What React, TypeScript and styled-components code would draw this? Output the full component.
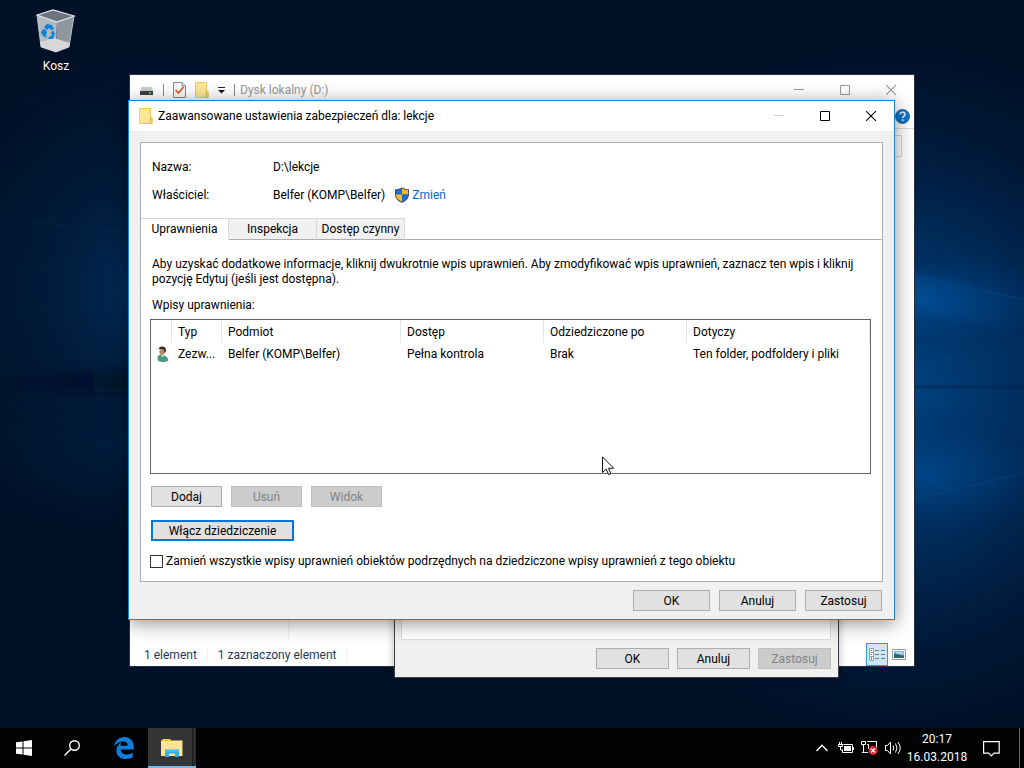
import React from 'react';
import styled, { createGlobalStyle, css } from 'styled-components';

const font = 'Roboto, "Open Sans", sans-serif';

const GlobalStyle = createGlobalStyle`
  *, *::before, *::after { box-sizing: border-box; }
  body { margin: 0; background: #00122b; font: 12px/15px ${font}; color: #000; }
  button, input, table { font: inherit; color: inherit; }
`;

/* ---------- desktop ---------- */

const Desktop = styled.div`
  position: relative;
  display: flex;
  flex-direction: column;
  min-height: 100vh;
  overflow: hidden;
`;

const WallpaperSvg = styled.svg`
  position: absolute;
  inset: 0;
  width: 100%;
  height: 100%;
`;

const Workspace = styled.main`
  position: relative;
  flex: 1;
  min-height: 680px;
`;

const DesktopIcon = styled.a`
  display: flex;
  flex-direction: column;
  align-items: center;
  gap: 4px;
  width: 76px;
  margin-left: 18px;
  padding-top: 7px;
  color: #fff;
  text-decoration: none;
  text-shadow: 0 1px 2px #000;
`;

/* ---------- windows ---------- */

const Window = styled.section`
  position: absolute;
  display: flex;
  flex-direction: column;
`;

const ExplorerWindow = styled(Window)`
  left: 129px;
  top: 74px;
  width: 786px;
  height: 593px;
  border: 1px solid #26323f;
  background: #fff;
`;

const PropertiesWindow = styled(Window)`
  left: 394px;
  top: 200px;
  width: 445px;
  height: 478px;
  padding: 7px 7px 8px 6px;
  gap: 8px;
  border: 1px solid #3c4046;
  background: #f0f0f0;
  box-shadow: 0 2px 8px rgba(0, 0, 0, 0.3);
`;

const SecurityWindow = styled(Window)`
  left: 128px;
  top: 100px;
  width: 767px;
  height: 520px;
  border: 1px solid #1883d7;
  background: #f0f0f0;
  box-shadow: 0 3px 18px rgba(0, 0, 0, 0.45);
`;

const TitleBar = styled.header<{ $inactive?: boolean }>`
  display: flex;
  align-items: center;
  height: 30px;
  padding-left: ${p => (p.$inactive ? 9 : 10)}px;
  background: #fff;
  color: ${p => (p.$inactive ? '#999' : '#000')};
`;

const QuickAccess = styled.div`
  display: flex;
  align-items: center;
  gap: 9px;
`;

const Separator = styled.span<{ $light?: boolean }>`
  width: 1px;
  height: 12px;
  background: ${p => (p.$light ? '#eee' : '#8a8a8a')};
`;

const Title = styled.h1`
  flex: 1;
  margin: 0 0 0 5px;
  font-size: 12px;
  font-weight: 400;
  white-space: nowrap;
`;

const CaptionButton = styled.button`
  display: grid;
  place-items: center;
  width: 46px;
  height: 30px;
  padding: 0;
  border: 0;
  background: none;
`;

const RibbonRow = styled.div`
  display: flex;
  justify-content: flex-end;
  align-items: center;
  height: 24px;
  padding-right: 4px;
  border-bottom: 1px solid #dadbdc;
`;

const HelpButton = styled.button`
  display: grid;
  place-items: center;
  padding: 0;
  border: 0;
  background: none;
`;

const SearchRow = styled.div`
  padding: 6px 12px;
`;

const SearchBox = styled.input`
  display: block;
  width: 100%;
  height: 22px;
  border: 1px solid #d9d9d9;
  background: #fff;
`;

const FolderArea = styled.div`
  flex: 1;
  margin-bottom: 2px;
  display: flex;
`;

const NavPane = styled.nav`
  width: 159px;
  border-right: 1px solid #f0f0f0;
`;

const StatusBar = styled.footer`
  display: flex;
  align-items: center;
  height: 23px;
  padding-left: 14px;
  gap: 10px;
  color: #1e395b;
`;

const StatusText = styled.span`
  padding-top: 2px;
`;

const ViewModes = styled.div`
  display: flex;
  margin-left: auto;
  padding-right: 4px;
`;

const ViewButton = styled.button<{ $active?: boolean }>`
  display: grid;
  place-items: center;
  width: 22px;
  height: 23px;
  padding: 0;
  border: 1px solid ${p => (p.$active ? '#26a0da' : 'transparent')};
  background: ${p => (p.$active ? '#cbe8f6' : 'none')};
`;

/* ---------- dialog parts ---------- */

const PushButton = styled.button<{ $size: 'small' | 'sheet' | 'dialog' | 'wide'; $focused?: boolean }>`
  width: ${p => ({ small: 71, sheet: 73, dialog: 77, wide: 143 })[p.$size]}px;
  height: 21px;
  padding: 1px 0 0;
  border: 1px solid #adadad;
  background: #e1e1e1;
  line-height: 15px;
  white-space: nowrap;
  ${p => p.$focused && css`border: 2px solid #0078d7;`}
  &:disabled {
    border-color: #bfbfbf;
    background: #ccc;
    color: #838383;
  }
`;

const ButtonRow = styled.div<{ $align?: 'end'; $gap: number }>`
  display: flex;
  gap: ${p => p.$gap}px;
  justify-content: ${p => (p.$align === 'end' ? 'flex-end' : 'flex-start')};
`;

const DialogButtons = styled(ButtonRow)`
  padding-right: 1px;
`;

const PropertiesPage = styled.div`
  flex: 1;
  border: 1px solid #dcdcdc;
  background: #fff;
`;

const DialogBody = styled.div`
  flex: 1;
  display: flex;
  flex-direction: column;
  gap: 8px;
  padding: 11px 11px 8px;
`;

const Panel = styled.div`
  flex: 1;
  display: flex;
  flex-direction: column;
  border: 1px solid #adadad;
  background: #fff;
`;

const Details = styled.dl`
  display: grid;
  grid-template-columns: 121px 1fr;
  grid-auto-rows: 20px;
  row-gap: 8px;
  align-items: center;
  margin: 0;
  padding: 14px 11px 13px;
`;

const Term = styled.dt``;

const Detail = styled.dd`
  display: flex;
  align-items: center;
  gap: 9px;
  margin: 0;
`;

const ChangeLink = styled.a`
  display: flex;
  align-items: center;
  gap: 2px;
  color: #0066cc;
  text-decoration: none;
`;

const TabList = styled.div`
  display: flex;
  height: 22px;
  &::after {
    content: '';
    flex: 1;
    border-bottom: 1px solid #adadad;
  }
`;

const Tab = styled.button<{ $selected?: boolean }>`
  width: 88px;
  padding: 0;
  border: 1px solid #d9d9d9;
  border-left-width: 0;
  border-bottom-color: ${p => (p.$selected ? '#fff' : '#adadad')};
  background: ${p => (p.$selected ? '#fff' : '#f0f0f0')};
  white-space: nowrap;
`;

const TabPanel = styled.div`
  flex: 1;
  display: flex;
  flex-direction: column;
  padding: 17px 11px 12px 9px;
`;

const Description = styled.p`
  margin: 0 0 11px;
  padding: 0 2px;
`;

const ListLabel = styled.h2`
  margin: 0 0 6px;
  padding: 0 2px;
  font-size: 12px;
  font-weight: 400;
`;

const ListBox = styled.div`
  flex: 1;
  margin-bottom: 12px;
  border: 1px solid #646464;
`;

const Entries = styled.table`
  width: 100%;
  table-layout: fixed;
  border-collapse: separate;
  border-spacing: 0;
`;

const HeaderCell = styled.th<{ $width?: number }>`
  width: ${p => (p.$width ? `${p.$width}px` : 'auto')};
  height: 23px;
  padding: 1px 6px 0;
  border-right: 1px solid #e5e5e5;
  font-weight: 400;
  text-align: left;
`;

const Cell = styled.td`
  height: 22px;
  padding: 0 6px;
  overflow: hidden;
  text-overflow: ellipsis;
  white-space: nowrap;
`;

const IconCell = styled(Cell)`
  padding: 0 4px;
  text-overflow: clip;
  & > svg { display: block; }
`;

const Actions = styled.div`
  display: flex;
  flex-direction: column;
  gap: 13px;
  padding-left: 1px;
`;

const CheckLabel = styled.label`
  display: flex;
  align-items: center;
  gap: 3px;
  margin-top: 13px;
`;

const CheckBox = styled.input`
  appearance: none;
  width: 13px;
  height: 13px;
  margin: 0;
  border: 1px solid #333;
  background: #fff;
`;

const Pointer = styled.svg`
  position: absolute;
  left: 602px;
  top: 456px;
`;

/* ---------- taskbar ---------- */

const Taskbar = styled.footer`
  position: relative;
  display: flex;
  align-items: stretch;
  height: 40px;
  background: #010204;
  color: #fff;
`;

const TaskButton = styled.button<{ $active?: boolean }>`
  display: grid;
  place-items: center;
  width: 48px;
  padding: 0;
  border: 0;
  background: none;
  ${p => p.$active && css`
    background: linear-gradient(90deg, #343537 44px, #1c1d1f 44px, #1c1d1f 45px, #2c2d2f 45px);
    border-bottom: 2px solid #76b9ed;
    padding-top: 2px;
  `}
`;

const AppButtons = styled.div`
  display: flex;
  margin-left: 4px;
`;

const Tray = styled.div`
  display: flex;
  align-items: stretch;
  margin-left: auto;
`;

const TrayButton = styled.button<{ $wide?: boolean }>`
  display: grid;
  place-items: center;
  width: ${p => (p.$wide ? 46 : 24)}px;
  padding: 0;
  border: 0;
  background: none;
`;

const Clock = styled.time`
  display: flex;
  flex-direction: column;
  gap: 3px;
  width: 62px;
  padding-top: 4px;
  text-align: center;
`;

const ShowDesktop = styled.button`
  width: 5px;
  margin-left: 5px;
  padding: 0;
  border: 0;
  border-left: 1px solid #6a6b6d;
  background: none;
`;

/* ---------- drawings ---------- */

const Wallpaper = () => (
  <WallpaperSvg viewBox="0 0 1024 768" preserveAspectRatio="none" aria-hidden="true">
    <defs>
      <radialGradient id="glowRight">
        <stop offset="0" stopColor="#0058a8" />
        <stop offset="0.45" stopColor="#004080" stopOpacity="0.75" />
        <stop offset="1" stopColor="#00204a" stopOpacity="0" />
      </radialGradient>
      <radialGradient id="glowLeft">
        <stop offset="0" stopColor="#003566" stopOpacity="0.9" />
        <stop offset="1" stopColor="#001a3a" stopOpacity="0" />
      </radialGradient>
      <linearGradient id="ray" x1="0" x2="1">
        <stop offset="0" stopColor="#0a62b4" stopOpacity="0.6" />
        <stop offset="1" stopColor="#00509a" stopOpacity="0.1" />
      </linearGradient>
      <linearGradient id="band" x1="0" x2="1">
        <stop offset="0" stopColor="#000d20" stopOpacity="0" />
        <stop offset="1" stopColor="#000d20" stopOpacity="0.8" />
      </linearGradient>
      <filter id="soft" x="-20%" y="-50%" width="140%" height="200%">
        <feGaussianBlur stdDeviation="4" />
      </filter>
    </defs>
    <rect width="1024" height="768" fill="#001128" />
    <ellipse cx="890" cy="390" rx="330" ry="350" fill="url(#glowRight)" opacity="0.75" />
    <ellipse cx="925" cy="300" rx="170" ry="60" fill="url(#glowRight)" opacity="0.45" />
    <ellipse cx="925" cy="475" rx="150" ry="70" fill="url(#glowRight)" opacity="0.45" />
    <ellipse cx="140" cy="290" rx="220" ry="240" fill="url(#glowLeft)" opacity="0.85" />
    <ellipse cx="130" cy="450" rx="200" ry="90" fill="url(#glowLeft)" opacity="0.3" />
    <path d="M905 272 1024 300V330L905 310z" fill="url(#ray)" opacity="0.5" filter="url(#soft)" />
    <path d="M915 276 1024 299.500" stroke="#0b62ae" strokeOpacity="0.3" />
    <path d="M915 499 1024 473" stroke="#0b62ae" strokeOpacity="0.3" />
    <path d="M915 387H1024" stroke="#002448" strokeWidth="4" strokeOpacity="0.4" />
    <path d="M0 372H150V392H0z" fill="url(#band)" filter="url(#soft)" />
    <path d="M0 218 130 233" stroke="#0a4070" strokeOpacity="0.25" />
    <path d="M30 98 66 122" stroke="#0a4070" strokeOpacity="0.2" />
  </WallpaperSvg>
);

const RecycleBinIcon = () => (
  <svg width="40" height="48" viewBox="0 0 40 48" aria-hidden="true">
    <path d="M1 8 21 15 20 45 5 40z" fill="#b4bac1" />
    <path d="M21 15 38 9 33 40 20 45z" fill="#8d979f" />
    <path d="M1 8 17 3 38 9 21 15z" fill="#6c7480" />
    <path d="M4 35 18 31 34 36 33 40 20 45 5 40z" fill="#d5d7d9" />
    <path d="M1 8 17 3 38 9 21 15z" fill="none" stroke="#e4e7ea" strokeWidth="1.200" />
    <path d="M1 8 5 40 20 45 33 40 38 9" fill="none" stroke="#d3d8dc" strokeWidth="0.800" />
    <g fill="#0a84d8">
      <path d="M8 20l3-3 5 1 2 4-3 1-2-2-2 2z" />
      <path d="M6 23l3-1 2 3-1 3 1 3-4-2-2-3z" />
      <path d="M17 23l2 4-2 5h-5l2-3h2l-1-3z" />
    </g>
  </svg>
);

const FolderIcon = () => (
  <svg width="14" height="16" viewBox="0 0 14 16" aria-hidden="true">
    <path d="M.5.500h11v9h1.500v6H.500z" fill="#ffe594" stroke="#f0cb5e" />
    <path d="M11 15.500v-5.500l2-.5v6z" fill="#fbd768" stroke="#e6bd45" strokeWidth="0.800" />
  </svg>
);

const DriveIcon = () => (
  <svg width="15" height="16" viewBox="0 0 15 16" aria-hidden="true">
    <path d="M2.500 5h10L14 9H1z" fill="#c9ccce" />
    <path d="M1 9h13v4H1z" fill="#3b3f42" />
    <path d="M10 11h2" stroke="#5fe06a" strokeWidth="1.500" />
  </svg>
);

const PropertiesIcon = () => (
  <svg width="13" height="16" viewBox="0 0 13 16" aria-hidden="true">
    <path d="M.5.500h8.500l3.500 3.500v11.500H.500z" fill="#fafafa" stroke="#888" />
    <path d="M9 .500V4h3.500" fill="#ddd" stroke="#888" />
    <path d="M2.500 8 5.500 11 10.500 5" fill="none" stroke="#e8561f" strokeWidth="1.700" />
  </svg>
);

const DropIcon = () => (
  <svg width="7" height="8" viewBox="0 0 7 8" aria-hidden="true">
    <path d="M0 1.500h7" stroke="#222" />
    <path d="M0 4h7L3.500 7.500z" fill="#111" />
  </svg>
);

const MinimizeIcon = ({ color }: { color: string }) => (
  <svg width="10" height="10" viewBox="0 0 10 10" aria-hidden="true">
    <path d="M0 4.500h10" stroke={color} />
  </svg>
);

const MaximizeIcon = ({ color }: { color: string }) => (
  <svg width="10" height="10" viewBox="0 0 10 10" aria-hidden="true">
    <path d="M.5.500h9v9h-9z" fill="none" stroke={color} />
  </svg>
);

const CloseIcon = ({ color }: { color: string }) => (
  <svg width="10" height="10" viewBox="0 0 10 10" aria-hidden="true">
    <path d="M0 0 10 10M10 0 0 10" stroke={color} strokeWidth="1.100" />
  </svg>
);

const HelpIcon = () => (
  <svg width="15" height="15" viewBox="0 0 15 15" aria-hidden="true">
    <circle cx="7.500" cy="7.500" r="7" fill="#0a76d0" stroke="#07549b" strokeWidth="0.800" />
    <path d="M5.200 5.500c0-3 4.800-3 4.800-.2 0 1.800-2.300 1.800-2.300 3.700M7.700 10.200v1.800" fill="none" stroke="#d8ecfb" strokeWidth="1.700" />
  </svg>
);

const ShieldIcon = () => (
  <svg width="16" height="16" viewBox="0 0 16 16" aria-hidden="true">
    <path d="M8 .200C6 1.700 3.500 2.200 1 2.200v5.300c0 4 3 6.800 7 8.300 4-1.500 7-4.300 7-8.300V2.200C12.500 2.200 10 1.700 8 .200z" fill="#48525c" />
    <path d="M8 1.500V7.500H2V3.200c2.300 0 4.300-.5 6-1.700z" fill="#1b6fd0" />
    <path d="M8 1.500V7.500h6V3.200c-2.300 0-4.300-.5-6-1.700z" fill="#fdbb2c" />
    <path d="M2 7.500h6v7c-3.500-1.300-6-3.500-6-7z" fill="#fdbb2c" />
    <path d="M14 7.500H8v7c3.500-1.300 6-3.500 6-7z" fill="#1b6fd0" />
  </svg>
);

const PersonIcon = () => (
  <svg width="16" height="16" viewBox="0 0 16 16" aria-hidden="true">
    <path d="M3 14.500c-1-2.500-1-5.500 3-6 3 0 7 2.500 7.500 6-3 2-8 2-10.500 0z" fill="#4a9c7c" />
    <path d="M5.500 8.500 8 11.500l1-2.500z" fill="#e4efe9" />
    <ellipse cx="7" cy="5.500" rx="2.600" ry="3.800" fill="#b98a68" />
    <path d="M3.500 3C4-.5 11.500-.8 11 4.500L9.800 7.500 8.500 3z" fill="#2f2b29" />
  </svg>
);

const DetailsViewIcon = () => (
  <svg width="16" height="14" viewBox="0 0 16 14" aria-hidden="true">
    <path d="M.5.500h4v4h-4zM.5 4.500h4v4h-4zM.5 8.500h4v4h-4z" fill="#fff" stroke="#999" />
    <path d="M2 2.500h1" stroke="#444" />
    <path d="M2 6.500h1" stroke="#2a7ad0" />
    <path d="M2 10.500h1" stroke="#e02020" strokeWidth="2" />
    <path d="M6 2.500h4M12 2.500h4M6 6.500h4M12 6.500h4M6 10.500h4M12 10.500h4" stroke="#777" />
  </svg>
);

const PictureViewIcon = () => (
  <svg width="14" height="11" viewBox="0 0 14 11" aria-hidden="true">
    <path d="M.5.500h13v10H.500z" fill="#fff" stroke="#999" />
    <path d="M2 2h10v7H2z" fill="#7fb5f0" />
    <path d="M2 4.500c4 0 6 2 10 2V9H2z" fill="#2e6a6a" />
    <path d="M4 4h7" stroke="#e8f3fd" />
  </svg>
);

const ArrowCursor = () => (
  <Pointer width="13" height="20" viewBox="0 0 13 20" aria-hidden="true">
    <path d="M.5.800V16.500L4.200 13l2.500 5.700 2.200-1-2.400-5.400h5.200z" fill="#fff" stroke="#111" />
  </Pointer>
);

const StartIcon = () => (
  <svg width="16" height="16" viewBox="0 0 16 16" fill="#fff" aria-hidden="true">
    <path d="M0 2.300 6.500 1.400V7.500H0zM7.500 1.200 16 0v7.500H7.500zM0 8.500h6.500v6.100L0 13.700zM7.500 8.500H16V16l-8.500-1.200z" />
  </svg>
);

const SearchIcon = () => (
  <svg width="16" height="16" viewBox="0 0 16 16" fill="none" stroke="#fff" strokeWidth="1.400" aria-hidden="true">
    <circle cx="10.500" cy="5.500" r="4.800" />
    <path d="M7 9 .500 15.500" />
  </svg>
);

const EdgeIcon = () => (
  <svg width="20" height="22" viewBox="0 0 20 22" aria-hidden="true">
    <path
      d="M0 9.500C1 3.500 5.200 0 10.300 0 16 0 19.800 4.200 19.800 9.800v2.700H6.700c.2 3.300 2.900 5 6 5 2.200 0 4.200-.6 6-1.700v4.500c-2 1.100-4.400 1.700-7 1.700-5.600 0-9.300-3.200-9.300-8.300 0-3.700 2-6.800 5.300-8.200-.8 1-1.200 2.100-1.300 3.200h7.200c0-2.700-1.200-4.300-4-4.300-4 0-7.600 2.300-9.600 5.100z"
      fill="#0f7ddb"
    />
  </svg>
);

const ExplorerIcon = () => (
  <svg width="22" height="18" viewBox="0 0 22 18" aria-hidden="true">
    <path d="M0 1.500h1L2 0h7l1 1.500h11.500V17H0z" fill="#ffe594" />
    <path d="M1 .500h8.500V2H1z" fill="#f2b61e" />
    <path d="M4 18v-7.500h14V18h-4v-3.500H8V18z" fill="#33aee6" />
    <path d="M4 10.500h14v2H4z" fill="#5cc3ee" />
  </svg>
);

const ChevronIcon = () => (
  <svg width="12" height="8" viewBox="0 0 12 8" fill="none" stroke="#fff" strokeWidth="1.300" aria-hidden="true">
    <path d="M.5 7 6 1.200 11.500 7" />
  </svg>
);

const BatteryIcon = () => (
  <svg width="16" height="13" viewBox="0 0 16 13" aria-hidden="true">
    <path d="M5.500 2.500h9v8H4.500V7.500" fill="none" stroke="#fff" />
    <path d="M6 4h7v5H6zM14.500 5H16v3h-1.500z" fill="#fff" />
    <path d="M1.500 0v2M3.500 0v2M0 2.500h5M.5 3v1.500h4V3M2.500 5v3h2" fill="none" stroke="#fff" />
  </svg>
);

const NetworkIcon = () => (
  <svg width="18" height="16" viewBox="0 0 18 16" aria-hidden="true">
    <path d="M.5 1.500h4v3h-4zM2.500 4.500v8M1 12.500h6M6 1.500h9.500v6M7.500 9V4.500H6" fill="none" stroke="#fff" />
    <circle cx="12" cy="10.500" r="4.500" fill="#e0232e" />
    <path d="M10 8.500l4 4M14 8.500l-4 4" stroke="#fff" strokeWidth="1.300" />
  </svg>
);

const SoundIcon = () => (
  <svg width="18" height="14" viewBox="0 0 18 14" fill="none" stroke="#fff" aria-hidden="true">
    <path d="M.5 4.500h2l3-3.500v12l-3-3.500h-2z" />
    <path d="M8 4.500q1.500 2.500 0 5M10.500 2.500q3 4.500 0 9M13 1q4.500 6 0 12" />
  </svg>
);

const ActionCenterIcon = () => (
  <svg width="17" height="17" viewBox="0 0 17 17" fill="none" stroke="#fff" strokeWidth="1.200" aria-hidden="true">
    <path d="M.6 1.600h15.600v11.500h-5.200L8.300 15.800 5.700 13.100H.600z" />
  </svg>
);

/* ---------- composition ---------- */

const CaptionButtons = ({ color, minimizeColor = color }: { color: string; minimizeColor?: string }) => (
  <>
    <CaptionButton aria-label="Minimalizuj"><MinimizeIcon color={minimizeColor} /></CaptionButton>
    <CaptionButton aria-label="Maksymalizuj"><MaximizeIcon color={color} /></CaptionButton>
    <CaptionButton aria-label="Zamknij"><CloseIcon color={color} /></CaptionButton>
  </>
);

const columns = [
  { label: '', width: 21 },
  { label: 'Typ', width: 50 },
  { label: 'Podmiot', width: 179 },
  { label: 'Dostęp', width: 143 },
  { label: 'Odziedziczone po', width: 143 },
  { label: 'Dotyczy' },
];

const entry = ['Zezw...', 'Belfer (KOMP\\Belfer)', 'Pełna kontrola', 'Brak', 'Ten folder, podfoldery i pliki'];

const Explorer = () => (
  <ExplorerWindow aria-label="Dysk lokalny (D:)">
    <TitleBar $inactive>
      <QuickAccess>
        <DriveIcon />
        <Separator />
        <PropertiesIcon />
        <FolderIcon />
        <DropIcon />
        <Separator />
      </QuickAccess>
      <Title>Dysk lokalny (D:)</Title>
      <CaptionButtons color="#999" />
    </TitleBar>
    <RibbonRow>
      <HelpButton aria-label="Pomoc"><HelpIcon /></HelpButton>
    </RibbonRow>
    <SearchRow><SearchBox type="search" aria-label="Przeszukaj" /></SearchRow>
    <FolderArea><NavPane /></FolderArea>
    <StatusBar>
      <StatusText>1 element</StatusText>
      <Separator $light />
      <StatusText>1 zaznaczony element</StatusText>
      <Separator $light />
      <ViewModes>
        <ViewButton $active aria-label="Szczegóły"><DetailsViewIcon /></ViewButton>
        <ViewButton aria-label="Duże ikony"><PictureViewIcon /></ViewButton>
      </ViewModes>
    </StatusBar>
  </ExplorerWindow>
);

const Properties = () => (
  <PropertiesWindow aria-label="Właściwości">
    <PropertiesPage />
    <ButtonRow $align="end" $gap={8}>
      <PushButton $size="sheet">OK</PushButton>
      <PushButton $size="sheet">Anuluj</PushButton>
      <PushButton $size="sheet" disabled>Zastosuj</PushButton>
    </ButtonRow>
  </PropertiesWindow>
);

const SecurityDialog = () => (
  <SecurityWindow role="dialog" aria-labelledby="security-title">
    <TitleBar>
      <FolderIcon />
      <Title id="security-title">Zaawansowane ustawienia zabezpieczeń dla: lekcje</Title>
      <CaptionButtons color="#000" minimizeColor="#ccc" />
    </TitleBar>
    <DialogBody>
      <Panel>
        <Details>
          <Term>Nazwa:</Term>
          <Detail>D:\lekcje</Detail>
          <Term>Właściciel:</Term>
          <Detail>
            Belfer (KOMP\Belfer)
            <ChangeLink href="#owner"><ShieldIcon />Zmień</ChangeLink>
          </Detail>
        </Details>
        <TabList role="tablist">
          <Tab role="tab" aria-selected $selected>Uprawnienia</Tab>
          <Tab role="tab">Inspekcja</Tab>
          <Tab role="tab">Dostęp czynny</Tab>
        </TabList>
        <TabPanel role="tabpanel">
          <Description>
            Aby uzyskać dodatkowe informacje, kliknij dwukrotnie wpis uprawnień. Aby zmodyfikować wpis uprawnień, zaznacz ten wpis i kliknij pozycję Edytuj (jeśli jest dostępna).
          </Description>
          <ListLabel>Wpisy uprawnienia:</ListLabel>
          <ListBox>
            <Entries>
              <thead>
                <tr>
                  {columns.map(c => <HeaderCell key={c.label} $width={c.width}>{c.label}</HeaderCell>)}
                </tr>
              </thead>
              <tbody>
                <tr>
                  <IconCell><PersonIcon /></IconCell>
                  {entry.map(text => <Cell key={text}>{text}</Cell>)}
                </tr>
              </tbody>
            </Entries>
          </ListBox>
          <Actions>
            <ButtonRow $gap={9}>
              <PushButton $size="small">Dodaj</PushButton>
              <PushButton $size="small" disabled>Usuń</PushButton>
              <PushButton $size="small" disabled>Widok</PushButton>
            </ButtonRow>
            <PushButton $size="wide" $focused>Włącz dziedziczenie</PushButton>
          </Actions>
          <CheckLabel>
            <CheckBox type="checkbox" />
            Zamień wszystkie wpisy uprawnień obiektów podrzędnych na dziedziczone wpisy uprawnień z tego obiektu
          </CheckLabel>
        </TabPanel>
      </Panel>
      <DialogButtons $align="end" $gap={9}>
        <PushButton $size="dialog">OK</PushButton>
        <PushButton $size="dialog">Anuluj</PushButton>
        <PushButton $size="dialog">Zastosuj</PushButton>
      </DialogButtons>
    </DialogBody>
  </SecurityWindow>
);

export default function App() {
  return (
    <Desktop>
      <GlobalStyle />
      <Wallpaper />
      <Workspace>
        <DesktopIcon href="#bin"><RecycleBinIcon />Kosz</DesktopIcon>
        <Explorer />
        <Properties />
        <SecurityDialog />
        <ArrowCursor />
      </Workspace>
      <Taskbar>
        <TaskButton aria-label="Start"><StartIcon /></TaskButton>
        <TaskButton aria-label="Wyszukaj"><SearchIcon /></TaskButton>
        <AppButtons>
          <TaskButton aria-label="Microsoft Edge"><EdgeIcon /></TaskButton>
          <TaskButton $active aria-label="Eksplorator plików"><ExplorerIcon /></TaskButton>
        </AppButtons>
        <Tray>
          <TrayButton aria-label="Pokaż ukryte ikony"><ChevronIcon /></TrayButton>
          <TrayButton aria-label="Bateria"><BatteryIcon /></TrayButton>
          <TrayButton aria-label="Sieć"><NetworkIcon /></TrayButton>
          <TrayButton aria-label="Głośność"><SoundIcon /></TrayButton>
          <Clock><span>20:17</span><span>16.03.2018</span></Clock>
          <TrayButton $wide aria-label="Centrum akcji"><ActionCenterIcon /></TrayButton>
          <ShowDesktop aria-label="Pokaż pulpit" />
        </Tray>
      </Taskbar>
    </Desktop>
  );
}
